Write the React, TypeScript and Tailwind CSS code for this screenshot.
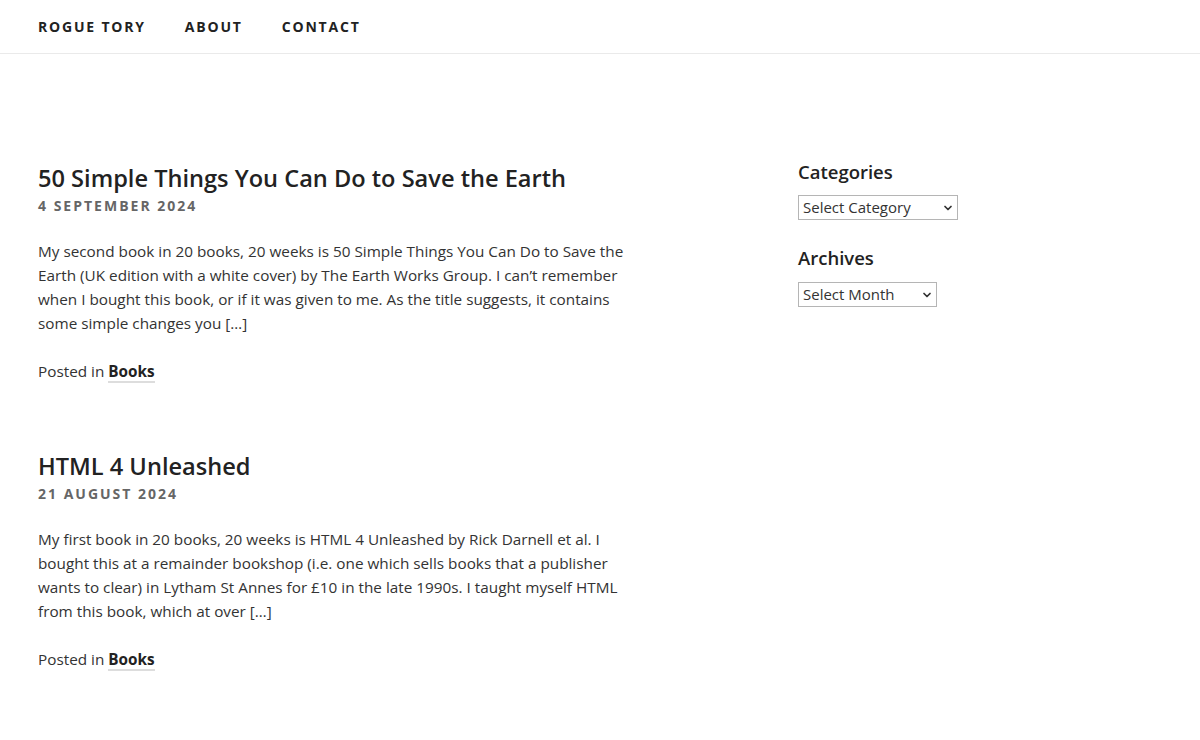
import { ChevronDown } from 'lucide-react';

const posts = [
  {
    title: '50 Simple Things You Can Do to Save the Earth',
    date: '4 September 2024',
    excerpt:
      'My second book in 20 books, 20 weeks is 50 Simple Things You Can Do to Save the Earth (UK edition with a white cover) by The Earth Works Group. I can’t remember when I bought this book, or if it was given to me. As the title suggests, it contains some simple changes you […]',
  },
  {
    title: 'HTML 4 Unleashed',
    date: '21 August 2024',
    excerpt:
      'My first book in 20 books, 20 weeks is HTML 4 Unleashed by Rick Darnell et al. I bought this at a remainder bookshop (i.e. one which sells books that a publisher wants to clear) in Lytham St Annes for £10 in the late 1990s. I taught myself HTML from this book, which at over […]',
  },
];

const Select = ({ label, width }: { label: string; width: string }) => (
  <div
    className={`flex h-[25px] items-center justify-between border border-[#b5b5b5] bg-white pl-[4px] pr-[3px] text-[15px] text-[#333] ${width}`}
  >
    <span>{label}</span>
    <ChevronDown size={12} strokeWidth={3.5} className="text-[#333]" />
  </div>
);

export default function App() {
  return (
    <div className="min-h-[740px] bg-white font-['Open_Sans',sans-serif] text-[#333]">
      <header className="flex h-[54px] items-center gap-[39px] border-b border-[#eaeaea] px-[38px] text-[14px] font-bold uppercase tracking-[1.8px] text-[#222]">
        <a>Rogue Tory</a>
        <a>About</a>
        <a>Contact</a>
      </header>

      <div className="flex px-[38px] pt-[107px]">
        <main className="w-[590px]">
          {posts.map((post) => (
            <article key={post.title} className="mb-[66px]">
              <h2 className="text-[23.6px] font-semibold leading-[34px] text-[#222]">{post.title}</h2>
              <div className="mt-[2px] text-[14px] font-bold uppercase leading-[18px] tracking-[2px] text-[#666]">
                {post.date}
              </div>
              <p className="mt-[24px] text-[15.3px] leading-[24px] text-[#333]">{post.excerpt}</p>
              <p className="mt-[24px] text-[15.3px] leading-[24px]">
                Posted in{' '}
                <a className="border-b-2 border-[#ddd] font-bold text-[#222]">Books</a>
              </p>
            </article>
          ))}
        </main>

        <aside className="ml-[170px]">
          <h3 className="text-[18.5px] font-semibold leading-[22px] text-[#222]">Categories</h3>
          <div className="mt-[12px]">
            <Select label="Select Category" width="w-[160px]" />
          </div>
          <h3 className="mt-[27px] text-[18.5px] font-semibold leading-[22px] text-[#222]">Archives</h3>
          <div className="mt-[13px]">
            <Select label="Select Month" width="w-[139px]" />
          </div>
        </aside>
      </div>
    </div>
  );
}
